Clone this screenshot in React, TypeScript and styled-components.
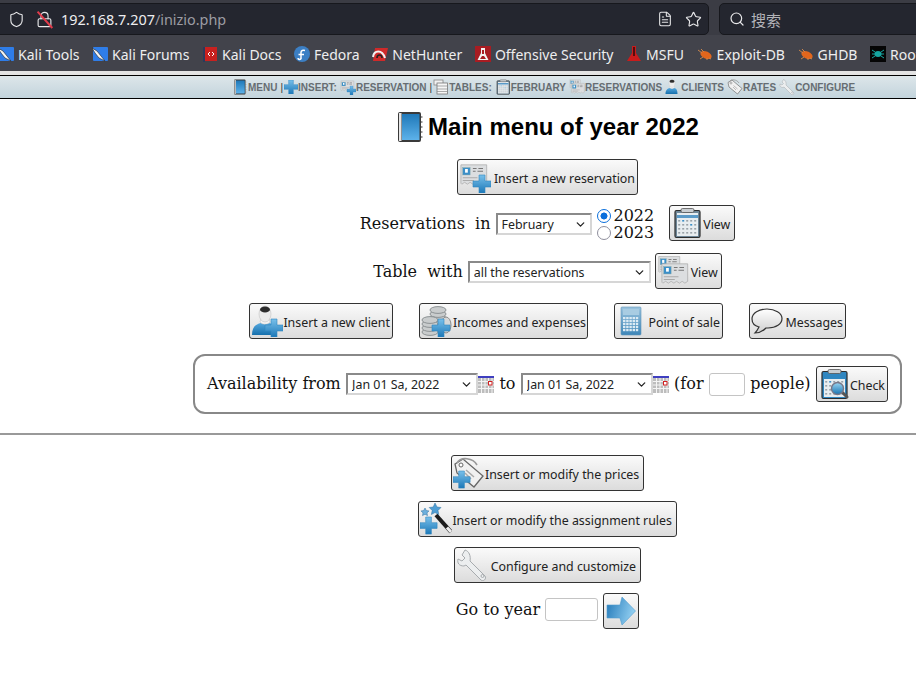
import React from 'react';
import styled, { createGlobalStyle } from 'styled-components';
import { ChevronDown, FileText, Lock, Search, Shield, Star } from 'lucide-react';

const GlobalStyle = createGlobalStyle`
  html, body {
    margin: 0;
    padding: 0;
    background: #fff;
    overflow: hidden;
    font-family: "DejaVu Serif", serif;
    font-size: 16px;
    color: #111;
  }
`;

type IconProps = { size?: number };

const Grad = ({ id, from, to, x2 = 0, y2 = 1 }: { id: string; from: string; to: string; x2?: number; y2?: number }) => (
  <linearGradient id={id} x1="0" y1="0" x2={x2} y2={y2}>
    <stop offset="0" stopColor={from} />
    <stop offset="1" stopColor={to} />
  </linearGradient>
);

const PlusShape = ({ x = 0, y = 0, s = 1 }: { x?: number; y?: number; s?: number }) => (
  <g transform={`translate(${x} ${y}) scale(${s})`}>
    <defs>
      <Grad id="plusGrad" from="#79c0ea" to="#1c78b8" />
    </defs>
    <path d="M6 0h6v6h6v6h-6v6H6v-6H0V6h6z" fill="url(#plusGrad)" stroke="#2f86c0" strokeWidth="0.6" />
  </g>
);

const CardShape = ({ x = 0, y = 0, s = 1 }: { x?: number; y?: number; s?: number }) => (
  <g transform={`translate(${x} ${y}) scale(${s})`}>
    <path d="M1 2h28v19l-3 2-3-2-3 2-3-2-3 2-3-2-3 2-3-2-3 2-1-1z" fill="#dcdee0" stroke="#a9a9a9" strokeWidth="0.8" />
    <rect x="3" y="5" width="8" height="8" fill="#3b8fc8" stroke="#8aa" strokeWidth="0.5" />
    <rect x="5.5" y="6.5" width="3" height="4" fill="#fff" />
    <path d="M14 6h4M20 6h5M14 9h3M19 9h6" stroke="#777" strokeWidth="1.2" />
    <path d="M3 16h16M3 19h12" stroke="#aaa" strokeWidth="1.2" />
  </g>
);

const NotebookIcon = ({ size = 32 }: IconProps) => (
  <svg width={size} height={size} viewBox="0 0 32 32">
    <defs>
      <Grad id="bookGrad" from="#1f78b8" to="#5db2ea" />
    </defs>
    <rect x="4" y="1" width="23" height="30" rx="2" fill="#3a3a3a" />
    <rect x="5" y="2" width="2.5" height="28" fill="#e6e6e6" />
    <rect x="8" y="3" width="17.5" height="26" fill="url(#bookGrad)" />
    <path d="M27 6h1.5M27 11h1.5M27 16h1.5M27 21h1.5M27 26h1.5" stroke="#777" strokeWidth="1.4" />
  </svg>
);

const PlusIcon = ({ size = 32 }: IconProps) => (
  <svg width={size} height={size} viewBox="0 0 18 18">
    <PlusShape />
  </svg>
);

const NewReservationIcon = ({ size = 32 }: IconProps) => (
  <svg width={size} height={size} viewBox="0 0 32 32">
    <CardShape x={1} y={2} s={0.92} />
    <PlusShape x={14} y={14} />
  </svg>
);

const ReservationsIcon = ({ size = 32 }: IconProps) => (
  <svg width={size} height={size} viewBox="0 0 32 32">
    <CardShape x={1} y={0} s={0.75} />
    <CardShape x={4} y={7} s={0.92} />
  </svg>
);

const TablesIcon = ({ size = 32 }: IconProps) => (
  <svg width={size} height={size} viewBox="0 0 32 32">
    <rect x="2" y="2" width="18" height="10" fill="#f2f2f2" stroke="#888" strokeWidth="1.6" />
    <rect x="8" y="8" width="21" height="22" fill="#f6f6f6" stroke="#777" strokeWidth="1.6" />
    <path d="M8 14h21M8 20h21M8 25h21" stroke="#888" strokeWidth="1.4" />
  </svg>
);

const CalendarDots = () => (
  <g>
    <rect x="6" y="6" width="21" height="23" fill="#e8edf0" />
    <rect x="6" y="8" width="21" height="3" fill="#5a9ac8" />
    {[13, 17, 21, 25].map((y) =>
      [8, 12, 16, 20, 24].map((x) => (
        <rect key={`${x}-${y}`} x={x - 0.8} y={y} width="2" height="1.6" fill={(x === 20 && y === 17) || (x === 12 && y === 13) ? '#3b8fc8' : '#9aa2a8'} />
      )),
    )}
  </g>
);

const ClipboardIcon = ({ size = 32 }: IconProps) => (
  <svg width={size} height={size} viewBox="0 0 32 32">
    <rect x="4" y="3.500" width="25" height="27" rx="1.500" fill="#6f8798" stroke="#2c2c2c" strokeWidth="1.2" />
    <CalendarDots />
    <rect x="10" y="1.500" width="13" height="4" rx="1.500" fill="#c9ced2" stroke="#555" strokeWidth="0.8" />
  </svg>
);

const CheckIcon = ({ size = 32 }: IconProps) => (
  <svg width={size} height={size} viewBox="0 0 32 32">
    <defs>
      <Grad id="lensGrad" from="#9bd6f2" to="#1873b0" />
    </defs>
    <rect x="4" y="3.500" width="25" height="27" rx="1.500" fill="#2f86c0" stroke="#2c2c2c" strokeWidth="1.2" />
    <CalendarDots />
    <rect x="6" y="6" width="21" height="5" fill="#2f86c0" />
    <rect x="10" y="1.500" width="13" height="4" rx="1.500" fill="#c9ced2" stroke="#555" strokeWidth="0.8" />
    <path d="M24 24l5 5" stroke="#555" strokeWidth="3" strokeLinecap="round" />
    <circle cx="19.5" cy="20.5" r="6" fill="url(#lensGrad)" stroke="#778" strokeWidth="1.4" />
  </svg>
);

const ClientShape = () => (
  <g>
    <defs>
      <Grad id="clientGrad" from="#55a8de" to="#1670ad" />
    </defs>
    <path d="M1 30c0-8 4-11 9-12l4 1 4-1c5 1 7 4 7 12z" fill="url(#clientGrad)" />
    <path d="M9 17c2 3 8 3 10 0l-1-4h-8z" fill="#f4f4f4" stroke="#bbb" strokeWidth="0.5" />
    <ellipse cx="14" cy="9" rx="6" ry="8" fill="#ececec" stroke="#bbb" strokeWidth="0.5" />
    <ellipse cx="14" cy="4.5" rx="5" ry="3" fill="#2d2d2d" />
  </g>
);

const ClientIcon = ({ size = 32 }: IconProps) => (
  <svg width={size} height={size} viewBox="0 0 32 32">
    <ClientShape />
  </svg>
);

const NewClientIcon = ({ size = 32 }: IconProps) => (
  <svg width={size} height={size} viewBox="0 0 32 32">
    <ClientShape />
    <PlusShape x={14} y={14} />
  </svg>
);

const TagShape = () => (
  <g>
    <path d="M2 7l8-5 20 17-9 11L4 16z" fill="#f1f1f1" stroke="#666" strokeWidth="1.3" />
    <circle cx="8" cy="8" r="2" fill="#fff" stroke="#666" />
    <path d="M4 6C8-1 20 1 24 8" fill="none" stroke="#999" strokeWidth="1.6" />
    <path d="M13 13l8 7M12 16l6 6" stroke="#aaa" strokeWidth="1.5" />
  </g>
);

const TagIcon = ({ size = 32 }: IconProps) => (
  <svg width={size} height={size} viewBox="0 0 32 32">
    <TagShape />
  </svg>
);

const NewPricesIcon = ({ size = 32 }: IconProps) => (
  <svg width={size} height={size} viewBox="0 0 32 32">
    <TagShape />
    <PlusShape x={0} y={14} s={0.95} />
  </svg>
);

const WrenchIcon = ({ size = 32 }: IconProps) => (
  <svg width={size} height={size} viewBox="0 0 32 32">
    <path
      d="M9 1l-3 5 3 3-3 3-4-2c-1 4 1 7 6 7l2-1 15 15c2 2 6-1 4-4L14 12c1-5-1-10-5-11z"
      fill="#eceeef"
      stroke="#a7abae"
      strokeWidth="1"
    />
    <circle cx="26.5" cy="27" r="1.5" fill="none" stroke="#a7abae" />
  </svg>
);

const CoinStack = ({ x, y, n }: { x: number; y: number; n: number }) => (
  <g>
    {Array.from({ length: n }, (_, i) => (
      <ellipse key={i} cx={x} cy={y - i * 4} rx="8" ry="3.4" fill="#c9cccd" stroke="#858a8c" strokeWidth="0.9" />
    ))}
  </g>
);

const CoinsIcon = ({ size = 32 }: IconProps) => (
  <svg width={size} height={size} viewBox="0 0 32 32">
    <CoinStack x={17} y={17} n={4} />
    <CoinStack x={9} y={27} n={4} />
    <ellipse cx="25" cy="20" rx="5" ry="8" fill="#d5d7d8" stroke="#8a8a8a" />
    <PlusShape x={11} y={14} />
  </svg>
);

const CalculatorIcon = ({ size = 32 }: IconProps) => (
  <svg width={size} height={size} viewBox="0 0 32 32">
    <defs>
      <Grad id="calcGrad" from="#9cc4de" to="#3d86b8" />
    </defs>
    <rect x="5" y="2" width="20" height="28" rx="1" fill="url(#calcGrad)" stroke="#5f95b8" strokeWidth="0.6" />
    <rect x="7" y="4" width="16" height="6" fill="#a8cce2" />
    {[12, 15, 18, 21, 24].map((y) =>
      [7, 10.2, 13.4, 16.6, 19.8].map((x) => <rect key={`${x}-${y}`} x={x} y={y} width="2.4" height="2.2" fill="#dcebf4" />),
    )}
  </svg>
);

const BubbleIcon = ({ size = 32 }: IconProps) => (
  <svg width={size} height={size} viewBox="0 0 32 32">
    <defs>
      <Grad id="bubbleGrad" from="#ffffff" to="#cfcfcf" />
    </defs>
    <path
      d="M16 4C8 4 1 8 1 14c0 4 3 7 7 8-1 2-2 4-4 6 4 0 8-2 11-5h2c8 0 14-4 14-9.500S24 4 16 4z"
      fill="url(#bubbleGrad)"
      stroke="#333"
      strokeWidth="1.2"
    />
  </svg>
);

const WandIcon = ({ size = 32 }: IconProps) => (
  <svg width={size} height={size} viewBox="0 0 32 32">
    <path d="M16 12l15 17" stroke="#1c1c1c" strokeWidth="4" />
    <path d="M27 24.500l4 4.500" stroke="#eee" strokeWidth="3" />
    <path d="M15 0l2 4 4 .5-3 3 .8 4-3.800-2-3.600 2 .8-4-3-3 4-.5z" fill="#4f9ed4" stroke="#2d6f9f" strokeWidth=".5" />
    <path d="M5 5l1.300 2.600 2.700.3-2 2 .5 2.700L5 11.300l-2.500 1.300.5-2.700-2-2 2.700-.3z" fill="#6db0dd" stroke="#2d6f9f" strokeWidth=".5" />
    <PlusShape x={0} y={14} s={0.95} />
  </svg>
);

const ArrowIcon = ({ size = 32 }: IconProps) => (
  <svg width={size} height={size} viewBox="0 0 32 32">
    <defs>
      <Grad id="arrowGrad" from="#2278b8" to="#8fcdf0" x2={1} y2={0.3} />
    </defs>
    <path d="M17 2l13.500 14L17 30l-2-7H2V10h13z" fill="url(#arrowGrad)" stroke="#4d9bcf" strokeWidth="0.6" />
  </svg>
);

const MiniCalendarIcon = () => (
  <svg width="16" height="17" viewBox="0 0 16 17">
    <rect x="0" y="0" width="16" height="17" fill="#bdbdbd" />
    <rect x="0" y="0" width="16" height="2" fill="#3f3fc0" />
    <path d="M3.500 2v15M7 2v15M10.500 2v15M14 2v15M0 5.500h16M0 9h16M0 12.500h16" stroke="#f4f4f4" strokeWidth="1" />
    <rect x="10.500" y="5.500" width="3.500" height="3.500" fill="#fff" stroke="#d02020" />
  </svg>
);

/* favicons of the bookmark bar */
const KaliFavicon = () => (
  <svg width="16" height="16" viewBox="0 0 16 16">
    <rect x="1" y="1" width="15" height="14" rx="1" fill="#2f7de8" />
    <path d="M0 2l5 3 4 5 4 5-6-3-4-5z" fill="#f4f4f4" stroke="#222" strokeWidth=".6" />
  </svg>
);

const DocsFavicon = () => (
  <svg width="16" height="16" viewBox="0 0 16 16">
    <rect x="1" y="1" width="2" height="15" fill="#2b3a5c" />
    <rect x="3" y="1" width="12" height="14" fill="#c8211f" />
    <path d="M8 6L6 8l2 2M10 6l2 2-2 2" stroke="#fff" fill="none" />
  </svg>
);

const FedoraFavicon = () => (
  <svg width="16" height="16" viewBox="0 0 16 16">
    <circle cx="8" cy="8" r="8" fill="#3c7fc4" />
    <path d="M7 13V6.500C7 4.500 9 4 11 4.500M4.500 8.500H10M7 12c0 2-3 2-3 0" stroke="#fff" strokeWidth="1.500" fill="none" />
  </svg>
);

const HunterFavicon = () => (
  <svg width="16" height="16" viewBox="0 0 16 16">
    <path d="M3 2h13l-3 13H1z" fill="#cf2a2a" />
    <path d="M1 11C2 4 10 3 13 12" fill="none" stroke="#f1f1f1" strokeWidth="2" />
    <path d="M5 12c0-4 5-4 5 0" fill="none" stroke="#222" strokeWidth="1.600" />
  </svg>
);

const FlaskBoxFavicon = () => (
  <svg width="16" height="16" viewBox="0 0 16 16">
    <rect width="16" height="16" fill="#a81c22" />
    <path d="M6 2h4v5l3.500 7h-11L6 7z" fill="#f2f2f2" />
    <path d="M7 4h2v4H7zM5 13l2-3h2l2 3z" fill="#a81c22" />
  </svg>
);

const FlaskFavicon = () => (
  <svg width="16" height="16" viewBox="0 0 16 16">
    <path d="M6 0h4v7l5 8H1l5-8z" fill="#c81c1c" />
    <path d="M7.200 1h1.600v9H7.200z" fill="#3a0a0a" />
  </svg>
);

const BugFavicon = () => (
  <svg width="16" height="16" viewBox="0 0 16 16">
    <ellipse cx="9" cy="9" rx="6" ry="3.500" transform="rotate(25 9 9)" fill="#e2661c" />
    <path d="M1 4l4 3M4 3l3 3M3 13l3-2M10 14l0-2M14 13l-2-1" stroke="#c9854d" strokeWidth="1" />
  </svg>
);

const RootFavicon = () => (
  <svg width="16" height="16" viewBox="0 0 16 16">
    <rect width="16" height="16" fill="#050505" />
    <ellipse cx="8" cy="8" rx="3.500" ry="3" fill="#15a5a0" />
    <path d="M2 4l3 2M14 4l-3 2M2 8h3M14 8h-3M2 12l3-2M14 12l-3-2" stroke="#15a5a0" strokeWidth="1" />
  </svg>
);

const bookmarks: [React.ReactNode, string][] = [
  [<KaliFavicon />, 'Kali Tools'],
  [<KaliFavicon />, 'Kali Forums'],
  [<DocsFavicon />, 'Kali Docs'],
  [<FedoraFavicon />, 'Fedora'],
  [<HunterFavicon />, 'NetHunter'],
  [<FlaskBoxFavicon />, 'Offensive Security'],
  [<FlaskFavicon />, 'MSFU'],
  [<BugFavicon />, 'Exploit-DB'],
  [<BugFavicon />, 'GHDB'],
  [<RootFavicon />, 'Root Me'],
];

const menuItems: [React.ReactNode, string, boolean?][] = [
  [<NotebookIcon size={16} />, 'MENU', true],
  [<PlusIcon size={14} />, 'INSERT:'],
  [<NewReservationIcon size={16} />, 'RESERVATION', true],
  [<TablesIcon size={16} />, 'TABLES:'],
  [<ClipboardIcon size={16} />, 'FEBRUARY'],
  [<ReservationsIcon size={16} />, 'RESERVATIONS'],
  [<ClientIcon size={16} />, 'CLIENTS'],
  [<TagIcon size={16} />, 'RATES'],
  [<WrenchIcon size={16} />, 'CONFIGURE'],
];

function DateField() {
  return (
    <DateGroup>
      <SelectWrap $width={132}>
        <NativeSelect defaultValue="Jan 01 Sa, 2022">
          <option>Jan 01 Sa, 2022</option>
        </NativeSelect>
        <Chevron />
      </SelectWrap>
      <MiniCalendarIcon />
    </DateGroup>
  );
}

export default function App() {
  return (
    <>
      <GlobalStyle />
      <Chrome>
        <AddressRow>
          <UrlBar>
            <Shield size={17} strokeWidth={1.6} color="#e8e8ea" />
            <LockIcon>
              <Lock size={17} strokeWidth={1.6} color="#e8e8ea" />
              <LockSlash />
            </LockIcon>
            <Url>
              192.168.7.207<UrlPath>/inizio.php</UrlPath>
            </Url>
            <UrlActions>
              <FileText size={16} strokeWidth={1.6} color="#e8e8ea" />
              <Star size={17} strokeWidth={1.6} color="#e8e8ea" />
            </UrlActions>
          </UrlBar>
          <SearchBar>
            <Search size={16} strokeWidth={1.8} color="#e8e8ea" />
            <SearchText>搜索</SearchText>
          </SearchBar>
        </AddressRow>
        <BookmarkRow>
          {bookmarks.map(([icon, label]) => (
            <Bookmark key={label}>
              {icon}
              <span>{label}</span>
            </Bookmark>
          ))}
        </BookmarkRow>
      </Chrome>
      <MenuBar>
        {menuItems.map(([icon, label, sep]) => (
          <MenuItem key={label}>
            {icon}
            <span>{label}</span>
            {sep && <MenuSep>|</MenuSep>}
          </MenuItem>
        ))}
      </MenuBar>

      <Main>
        <Title>
          <NotebookIcon size={32} />
          Main menu of year 2022
        </Title>

        <Row $top={16}>
          <Button $width={181}>
            <NewReservationIcon />
            <span>Insert a new reservation</span>
          </Button>
        </Row>

        <Row $top={10}>
          <Label>Reservations&nbsp; in</Label>
          <SelectWrap $width={96}>
            <NativeSelect defaultValue="February">
              <option>February</option>
            </NativeSelect>
            <Chevron />
          </SelectWrap>
          <YearChoice>
            <YearOption>
              <Radio type="radio" name="year" defaultChecked />
              2022
            </YearOption>
            <YearOption>
              <Radio type="radio" name="year" />
              2023
            </YearOption>
          </YearChoice>
          <Button $width={66} $right={4} $left={10}>
            <ClipboardIcon />
            <span>View</span>
          </Button>
        </Row>

        <Row $top={12}>
          <Label>Table&nbsp; with</Label>
          <SelectWrap $width={183}>
            <NativeSelect defaultValue="all">
              <option value="all">all the reservations</option>
            </NativeSelect>
            <Chevron />
          </SelectWrap>
          <Button $width={67} $right={3} $left={-1}>
            <ReservationsIcon />
            <span>View</span>
          </Button>
        </Row>

        <ButtonRow>
          <Button $width={144}>
            <NewClientIcon />
            <span>Insert a new client</span>
          </Button>
          <Button $width={169}>
            <CoinsIcon />
            <span>Incomes and expenses</span>
          </Button>
          <Button $width={109}>
            <CalculatorIcon />
            <span>Point of sale</span>
          </Button>
          <Button $width={97}>
            <BubbleIcon />
            <span>Messages</span>
          </Button>
        </ButtonRow>

        <AvailabilityBox>
          <Label>Availability from</Label>
          <DateField />
          <Label>to</Label>
          <DateField />
          <Label>(for</Label>
          <NumberInput $width={36} />
          <Label>people)</Label>
          <Button $width={72}>
            <CheckIcon />
            <span>Check</span>
          </Button>
        </AvailabilityBox>
      </Main>

      <Divider />

      <Main>
        <Row>
          <Button $width={193} $right={4}>
            <NewPricesIcon />
            <span>Insert or modify the prices</span>
          </Button>
        </Row>
        <Row $top={10}>
          <Button $width={259} $right={4}>
            <WandIcon />
            <span>Insert or modify the assignment rules</span>
          </Button>
        </Row>
        <Row $top={10}>
          <Button $width={187} $right={4}>
            <WrenchIcon />
            <span>Configure and customize</span>
          </Button>
        </Row>
        <YearRow $top={10}>
          <Label>Go to year</Label>
          <NumberInput $width={53} />
          <Button $width={36}>
            <ArrowIcon />
          </Button>
        </YearRow>
      </Main>
    </>
  );
}

const Chrome = styled.header`
  height: 71px;
  background: #42434b;
  color: #f1f1f3;
  font-family: "Noto Sans", sans-serif;
  border-bottom: 4px solid #e3e3e3;
`;

const AddressRow = styled.div`
  display: flex;
  gap: 10px;
  height: 35px;
  padding-top: 3px;
  box-sizing: border-box;
  background: #3b3c44;
`;

const UrlBar = styled.div`
  display: flex;
  align-items: center;
  width: 710px;
  height: 32px;
  margin-left: -1px;
  padding-left: 8px;
  box-sizing: border-box;
  background: #24262f;
  border: 1px solid #17181d;
  border-radius: 0 5px 5px 0;
  gap: 11px;
`;

const LockIcon = styled.span`
  position: relative;
  display: flex;
`;

const LockSlash = styled.i`
  position: absolute;
  left: 8px;
  top: -2px;
  width: 1.5px;
  height: 22px;
  background: #e23b4b;
  transform: rotate(-42deg);
`;

const Url = styled.span`
  margin-left: -3px;
  font-size: 14.4px;
  color: #eeeef0;
`;

const UrlPath = styled.span`
  color: #9c9ca3;
`;

const UrlActions = styled.span`
  display: flex;
  align-items: center;
  gap: 12px;
  margin-left: auto;
  padding-right: 6px;
`;

const SearchBar = styled.div`
  display: flex;
  flex: 1;
  align-items: center;
  gap: 6px;
  height: 32px;
  margin-right: -8px;
  padding-left: 9px;
  box-sizing: border-box;
  background: #24262f;
  border: 1px solid #17181d;
  border-radius: 5px;
`;

const SearchText = styled.span`
  font-family: "Noto Sans CJK SC", sans-serif;
  font-size: 15px;
  color: #b3b3b8;
`;

const BookmarkRow = styled.nav`
  display: flex;
  align-items: center;
  gap: 12.6px;
  height: 36px;
  padding-top: 2px;
  box-sizing: border-box;
  margin-left: -2px;
  white-space: nowrap;
  overflow: hidden;
  font-size: 14px;
`;

const Bookmark = styled.div`
  display: flex;
  align-items: center;
  gap: 4px;
  color: #eeeeef;
`;

const MenuBar = styled.nav`
  display: flex;
  align-items: center;
  gap: 3px;
  height: 22px;
  padding-left: 232px;
  background: linear-gradient(#dde6ea, #c3d4dc);
  border-top: 1px solid #000;
  border-bottom: 1px solid #000;
  font-family: "Liberation Sans", sans-serif;
  font-size: 10px;
  font-weight: bold;
  color: #666d72;
  white-space: nowrap;
`;

const MenuItem = styled.span`
  display: flex;
  align-items: center;
`;

const MenuSep = styled.span`
  margin: 0 -2px 0 3px;
  font-weight: normal;
  color: #333;
`;

const Main = styled.main`
  display: flex;
  flex-direction: column;
  padding-left: 179px;
`;

const Title = styled.h1`
  display: flex;
  align-items: center;
  justify-content: center;
  gap: 2px;
  margin: 12px 0 0;
  padding-right: 2px;
  font-family: "Liberation Sans", sans-serif;
  font-size: 24px;
  font-weight: bold;
  color: #000;
  line-height: 32px;
`;

const Row = styled.div<{ $top?: number }>`
  display: flex;
  align-items: center;
  justify-content: center;
  gap: 5px;
  margin-top: ${(p) => p.$top ?? 0}px;
`;

const ButtonRow = styled(Row)`
  gap: 26px;
  margin-top: 14px;
`;

const Label = styled.span`
  font-size: 16px;
  white-space: nowrap;
  color: #111;
`;

const Button = styled.button<{ $width: number; $right?: number; $left?: number }>`
  display: inline-flex;
  flex: none;
  align-items: center;
  justify-content: space-between;
  width: ${(p) => p.$width}px;
  height: 36px;
  margin: 0 0 0 ${(p) => p.$left ?? 0}px;
  padding: 0 ${(p) => p.$right ?? 2}px 0 1px;
  background: linear-gradient(#fafafa, #dcdcdc);
  border: 1px solid #333;
  border-radius: 3px;
  font-family: "Noto Sans", sans-serif;
  font-size: 12.4px;
  color: #222;
  white-space: nowrap;

  svg {
    flex: none;
  }

  span {
    margin-top: 2px;
  }
`;

const SelectWrap = styled.span<{ $width: number }>`
  position: relative;
  display: inline-flex;
  flex: none;
  width: ${(p) => p.$width}px;
  height: 22px;
  margin-top: 2px;
`;

const NativeSelect = styled.select`
  appearance: none;
  width: 100%;
  height: 100%;
  padding: 0 20px 0 4px;
  box-sizing: border-box;
  background: #fff;
  border-style: solid;
  border-width: 2px;
  border-color: #8a8a8a #d6d6d6 #d6d6d6 #8a8a8a;
  border-radius: 0;
  font-family: "Noto Sans", sans-serif;
  font-size: 12.4px;
  color: #222;
`;

const Chevron = styled(ChevronDown).attrs({ size: 13, strokeWidth: 2.4 })`
  position: absolute;
  right: 5px;
  top: 5px;
  color: #222;
  pointer-events: none;
`;

const DateGroup = styled.span`
  display: inline-flex;
  align-items: center;

  ${SelectWrap} {
    margin-top: 0;
  }
`;

const YearChoice = styled.div`
  display: flex;
  flex-direction: column;
  padding-top: 2px;
`;

const YearOption = styled.label`
  display: flex;
  align-items: center;
  height: 17px;
  line-height: 17px;
  font-size: 16px;
  gap: 3px;
`;

const Radio = styled.input`
  appearance: none;
  width: 14px;
  height: 14px;
  margin: 0;
  border: 1.5px solid #8f8f9d;
  border-radius: 50%;
  background: #fff;

  &:checked {
    border-color: #0a6fdc;
    background: radial-gradient(circle, #0a6fdc 0 3.2px, #fff 3.8px);
  }
`;

const NumberInput = styled.input.attrs({ type: 'text' })<{ $width: number }>`
  width: ${(p) => p.$width}px;
  height: 23px;
  padding: 0;
  box-sizing: border-box;
  background: #fff;
  border: 1px solid #c4c4c4;
  border-radius: 3px;
  flex: none;
`;

const AvailabilityBox = styled.div`
  display: flex;
  align-items: center;
  justify-content: space-between;
  width: 709px;
  height: 60px;
  margin: 15px 0 0 14px;
  padding: 0 12px;
  box-sizing: border-box;
  border: 2px solid #888;
  border-radius: 12px;

  ${Label} {
    margin-bottom: 2px;
  }
`;

const YearRow = styled(Row)`
  ${Label}, ${NumberInput} {
    margin-bottom: 4px;
  }
`;

const Divider = styled.hr`
  height: 2px;
  margin: 19px 0 20px;
  border: 0;
  background: #999;
`;
